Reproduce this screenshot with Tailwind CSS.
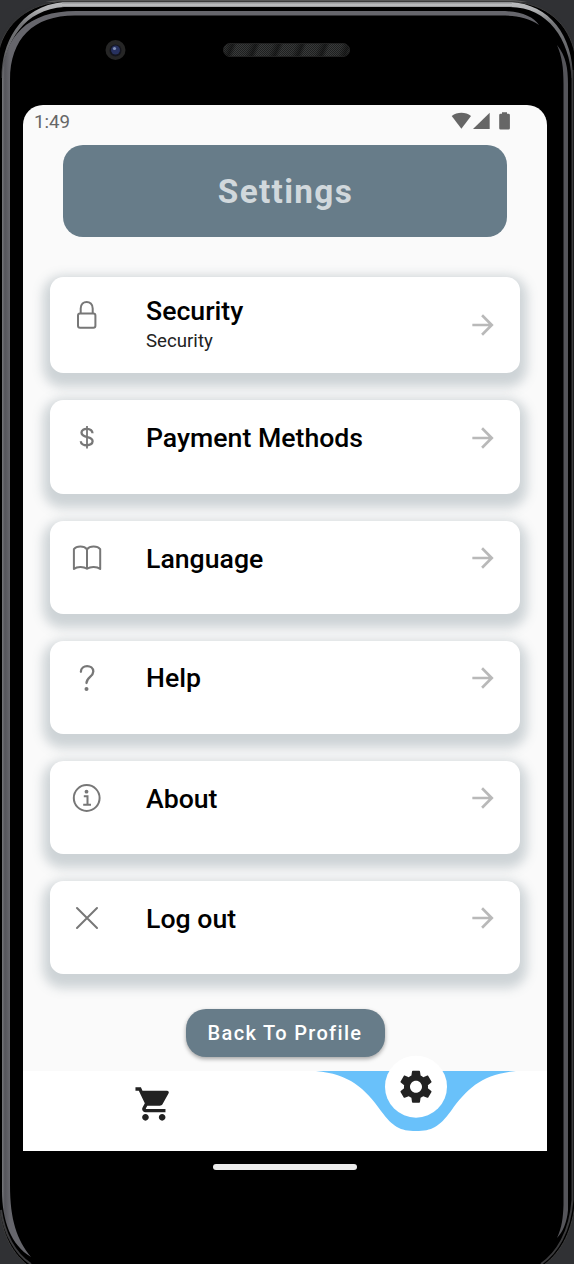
<!DOCTYPE html>
<html lang="en">
<head>
<meta charset="utf-8">
<title>Settings</title>
<script src="https://cdn.jsdelivr.net/npm/@tailwindcss/browser@4"></script>
</head>
<body class="bg-[#303134] overflow-hidden">
<div class="relative w-[574px] h-[1264px] overflow-hidden font-['Roboto','Liberation_Sans',sans-serif]">
  <!-- phone body -->
  <svg class="absolute inset-0" width="574" height="1264" viewBox="0 0 574 1264" fill="none">
    <defs>
      <linearGradient id="rim" x1="0" y1="0" x2="0" y2="80" gradientUnits="userSpaceOnUse">
        <stop offset="0" stop-color="#bfc0c2"/><stop offset=".12" stop-color="#b0b1b3"/><stop offset=".3" stop-color="#737477"/><stop offset=".65" stop-color="#66676a"/><stop offset="1" stop-color="#303033"/>
      </linearGradient>
      <linearGradient id="side" x1="2" y1="0" x2="10" y2="0" gradientUnits="userSpaceOnUse">
        <stop offset="0" stop-color="#77787c"/><stop offset=".35" stop-color="#55555b"/><stop offset="1" stop-color="#66666c"/>
      </linearGradient>
      <linearGradient id="top" x1="0" y1="2" x2="0" y2="8" gradientUnits="userSpaceOnUse">
        <stop offset="0" stop-color="#868789"/><stop offset=".5" stop-color="#c4c5c7"/><stop offset="1" stop-color="#77787a"/>
      </linearGradient>
      <pattern id="mesh" width="2" height="2" patternUnits="userSpaceOnUse"><path d="M0 0h1v1H0zM1 1h1v1H1z" fill="#000" fill-opacity=".45"/></pattern>
      <linearGradient id="stripe" x1="0" y1="0" x2="20" y2="8" gradientUnits="userSpaceOnUse" spreadMethod="repeat"><stop offset="0" stop-color="#3a3c3c"/><stop offset=".5" stop-color="#363838"/><stop offset=".8" stop-color="#1e1f1f"/><stop offset="1" stop-color="#3a3c3c"/></linearGradient>
    </defs>
    <rect width="574" height="2" fill="#575757"/>
    <path d="M0 0H64C32 0 7 17 0 42ZM574 0H510C543 1 566 15 574 46Z" fill="#303134"/>
    <path d="M-1 50C5 24 28 3 64 1.500H510C547 3 569 24 575 54L575 1205C571 1235 560 1254 540 1268H31C12 1254 2 1235 -1 1205Z" fill="#000" stroke="#3c3c3c"/>
    <path d="M1.500 78C1.500 45 18 6 64 2H510C550 4 573 36 573 78H571.500C570 40 548 7 510 7H64C25 9 4 42 2.500 78Z" fill="url(#rim)"/>
    <path d="M62 2H512V7H62Z" fill="url(#top)"/>
    <path d="M2 80C3 36 28 11 76 11H500C520 11 533 16 539 25C528 17 514 15.500 500 15.500H76C34 15 10 38 10 80V1185C10 1220 17 1240 31 1257C11 1245 2 1221 2 1190Z" fill="url(#side)"/>
    <path d="M557 45C566 56 568 68 568 84V1210C567 1222 563 1232 557 1238C562 1227 563 1218 563.500 1205V84C563.500 67 562 57 557 45Z" fill="#55555a"/>
    <path d="M572.500 70V1200C570 1232 557 1253 541 1264M1 1210C4 1233 15 1254 31 1264" stroke="#3b3b3d" stroke-width="2"/>
    <circle cx="115.500" cy="50" r="10" fill="#262626"/>
    <circle cx="115.500" cy="50.500" r="6" fill="#14151d"/>
    <circle cx="115.500" cy="50" r="4.500" fill="#27315f"/>
    <circle cx="114.500" cy="48.500" r="1.600" fill="#8291b8"/>
    <rect x="223.500" y="43.500" width="126" height="13" rx="6.500" fill="url(#stripe)" stroke="#252525"/>
    <rect x="223.500" y="43.500" width="126" height="13" rx="6.500" fill="url(#mesh)"/>
  </svg>

  <!-- icon set -->
  <svg class="hidden">
    <symbol id="arrow" viewBox="0 0 24 24"><path fill="#b9b9b9" d="M12 4l-1.410 1.410L16.170 11H4v2h12.170l-5.580 5.590L12 20l8-8z"/></symbol>
  </svg>

  <div class="relative pt-[105px] pl-[23px]">
    <main class="w-[524px] h-[1046px] bg-[#fafafa] rounded-t-[20px] flex flex-col">
      <div class="h-[40px] shrink-0 flex justify-between items-start pl-[11px] pr-[36px] pt-[5px] text-[#666]">
        <span class="text-[18.700px] leading-[24px]">1:49</span>
        <svg class="mt-[1px]" width="60" height="22" viewBox="0 0 60 22" fill="#666"><path d="M.7 4.900C6.200.8 14.600.8 20 4.900L10.400 17.700z"/><path d="M22 18L38.700 1.700V18z"/><path d="M48.200 4.200q0-1.400 1.400-1.400h1.400V1.200h5v1.600h1.500q1.400 0 1.400 1.400v13q0 1.300-1.400 1.300h-7.900q-1.400 0-1.400-1.300z"/></svg>
      </div>
      <header class="mx-10 h-[92px] shrink-0 rounded-[20px] bg-[#677c89] flex items-center justify-center">
        <h1 class="pt-[2px] pl-px text-[33.330px] font-bold tracking-[1.330px] text-[#d1d8dc] leading-none">Settings</h1>
      </header>

      <section class="mt-[40.200px] ml-[27px] w-[470px] flex flex-col gap-[26.900px]">
        <div class="h-[96.300px] rounded-[13.300px] bg-white shadow-[0_6.700px_11px_6.700px_rgba(103,124,132,0.3)] flex">
          <svg class="ml-[20px] mt-[20.800px] shrink-0" width="34" height="34" fill="none" stroke="#777" stroke-width="2"><rect x="8" y="15.400" width="17.400" height="14.400" rx="2"/><path d="M10.700 15V10.500C10.700 1.700 22.700 1.700 22.700 10.500V15"/></svg>
          <div class="ml-[42px] pt-[19px] flex-1"><div class="text-[26.670px] leading-[31px] font-medium text-black">Security</div><div class="text-[18.670px] leading-[22px] mt-[3px] text-[#222]">Security</div></div>
          <svg class="mt-[32.300px] mr-[21.500px] size-8"><use href="#arrow"/></svg>
        </div>
        <div class="h-[93.300px] rounded-[13.300px] bg-white shadow-[0_6.700px_11px_6.700px_rgba(103,124,132,0.3)] flex">
          <svg class="ml-[20px] mt-[20px] shrink-0" width="34" height="34" fill="none" stroke="#777" stroke-width="2.300"><path d="M22.500 13.300C22.200 7.600 11.500 7.600 11.500 12.600C11.500 19 22.600 15.500 22.600 21.300C22.600 26.600 11 26.600 10.800 21.200"/><path stroke-width="1.800" d="M17 6V28.500"/></svg>
          <div class="ml-[42px] pt-[22.500px] flex-1 text-[26.670px] leading-[31px] font-medium text-black">Payment Methods</div>
          <svg class="mt-[21.300px] mr-[21.500px] size-8"><use href="#arrow"/></svg>
        </div>
        <div class="h-[93.300px] rounded-[13.300px] bg-white shadow-[0_6.700px_11px_6.700px_rgba(103,124,132,0.3)] flex">
          <svg class="ml-[20px] mt-[19.500px] shrink-0" width="34" height="34" fill="none" stroke="#777" stroke-width="2" stroke-linejoin="round"><path d="M17 9.300C14 5.500 6.500 5.800 3.900 9.200V29C7 26.400 13.500 26.200 17 28.800C20.500 26.200 27 26.400 30.200 29V9.200C27.500 5.800 20 5.500 17 9.300ZM17 9V28.500"/></svg>
          <div class="ml-[42px] pt-[23.500px] flex-1 text-[26.670px] leading-[31px] font-medium text-black">Language</div>
          <svg class="mt-[21.300px] mr-[21.500px] size-8"><use href="#arrow"/></svg>
        </div>
        <div class="h-[93.300px] rounded-[13.300px] bg-white shadow-[0_6.700px_11px_6.700px_rgba(103,124,132,0.3)] flex">
          <svg class="ml-[20px] mt-[20px] shrink-0" width="34" height="34" fill="none" stroke="#777" stroke-width="2.300" stroke-linecap="round"><path d="M10.900 10.800C10.900 3.200 23.300 3.400 23.300 10.600C23.300 15.800 16.500 16 16.500 22"/><circle cx="16.500" cy="28" r="2" fill="#777" stroke="none"/></svg>
          <div class="ml-[42px] pt-[22.500px] flex-1 text-[26.670px] leading-[31px] font-medium text-black">Help</div>
          <svg class="mt-[21px] mr-[21.500px] size-8"><use href="#arrow"/></svg>
        </div>
        <div class="h-[93.300px] rounded-[13.300px] bg-white shadow-[0_6.700px_11px_6.700px_rgba(103,124,132,0.3)] flex">
          <svg class="ml-[20px] mt-[20px] shrink-0" width="34" height="34" fill="none" stroke="#777" stroke-width="2"><circle cx="16.700" cy="17" r="12.900"/><circle cx="16.500" cy="10.700" r="1.900" fill="#777" stroke="none"/><path d="M13.800 15.200H17.500V23.500M13.200 23.700H21"/></svg>
          <div class="ml-[42px] pt-[22.800px] flex-1 text-[26.670px] leading-[31px] font-medium text-black">About</div>
          <svg class="mt-[21px] mr-[21.500px] size-8"><use href="#arrow"/></svg>
        </div>
        <div class="h-[93.300px] rounded-[13.300px] bg-white shadow-[0_6.700px_11px_6.700px_rgba(103,124,132,0.3)] flex">
          <svg class="ml-[20px] mt-[20px] shrink-0" width="34" height="34" fill="none" stroke="#777" stroke-width="2" stroke-linecap="round"><path d="M7 7L27 27M27 7L7 27"/></svg>
          <div class="ml-[42px] pt-[22.800px] flex-1 text-[26.670px] leading-[31px] font-medium text-black">Log out</div>
          <svg class="mt-[21px] mr-[21.500px] size-8"><use href="#arrow"/></svg>
        </div>
      </section>

      <button class="mt-[34.800px] ml-[162.500px] w-[199px] h-[48px] shrink-0 rounded-[20px] bg-[#677c89] text-white text-[20px] font-medium tracking-[1.330px] leading-none shadow-[0_2px_4px_rgba(0,0,0,0.35)]">Back To Profile</button>

      <nav class="relative mt-auto h-[80px] shrink-0 bg-white">
        <svg class="block overflow-visible" width="524" height="80" viewBox="0 0 524 80">
          <path fill="#69c1fa" d="M293 0H493C460 3 444 17 428 40C416 56 409 60 393 60S370 56 358 40C342 17 326 3 293 0Z"/>
          <circle cx="393" cy="15.700" r="31" fill="#fff"/>
          <g fill="#222"><path transform="translate(373 -4.300) scale(1.6667)" d="M19.140 12.940c.04-.3.060-.61.060-.94 0-.32-.02-.64-.07-.94l2.030-1.580c.18-.14.23-.41.120-.61l-1.920-3.320c-.12-.22-.37-.29-.59-.22l-2.390.96c-.5-.38-1.030-.7-1.620-.94l-.36-2.540c-.04-.24-.24-.41-.48-.41h-3.840c-.24 0-.43.17-.47.41l-.36 2.540c-.59.24-1.130.57-1.620.94l-2.390-.96c-.22-.08-.47 0-.59.22L2.740 8.870c-.12.21-.08.47.12.61l2.030 1.580c-.05.3-.09.63-.09.94s.02.64.07.94l-2.030 1.580c-.18.14-.23.41-.12.61l1.920 3.320c.12.22.37.29.59.22l2.390-.96c.5.38 1.030.7 1.620.94l.36 2.540c.05.24.24.41.48.41h3.840c.24 0 .44-.17.47-.41l.36-2.540c.59-.24 1.130-.56 1.620-.94l2.390.96c.22.08.47 0 .59-.22l1.920-3.320c.12-.22.070-.47-.12-.61l-2.010-1.580zM12 15.600c-1.980 0-3.600-1.620-3.600-3.600s1.620-3.600 3.600-3.600 3.600 1.620 3.600 3.600-1.620 3.600-3.600 3.600z"/>
          <path transform="translate(110.800 13) scale(1.6667)" d="M7 18c-1.100 0-1.990.9-1.990 2S5.900 22 7 22s2-.9 2-2-.9-2-2-2zM1 2v2h2l3.600 7.590-1.350 2.450c-.16.28-.25.61-.25.96 0 1.100.9 2 2 2h12v-2H7.420c-.14 0-.25-.11-.25-.25l.03-.12.900-1.630h7.450c.75 0 1.410-.41 1.750-1.030l3.580-6.490c.08-.14.120-.31.120-.48 0-.55-.45-1-1-1H5.210l-.94-2H1zm16 16c-1.100 0-1.990.9-1.990 2s.89 2 1.990 2 2-.9 2-2-.9-2-2-2z"/></g>
        </svg>
      </nav>
    </main>
    <div class="mt-[13px] ml-[190px] w-[144px] h-[6px] rounded-full bg-[#ececec]"></div>
  </div>
</div>
</body>
</html>
